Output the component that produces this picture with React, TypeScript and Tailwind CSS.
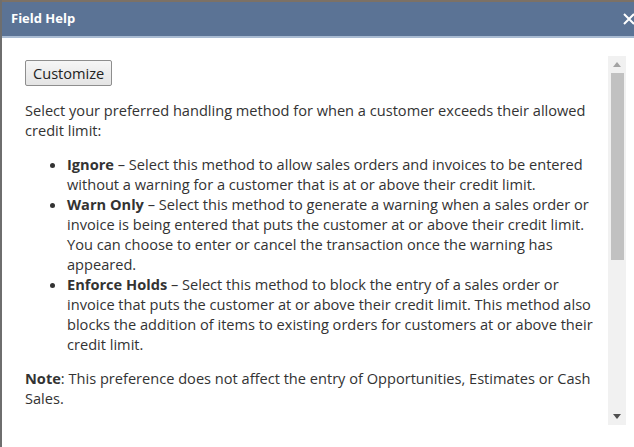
export default function App() {
  return (
    <div className="w-[634px] h-[447px] overflow-hidden bg-white flex flex-col border-l-2 border-[#6e6e6e] font-['Open_Sans',sans-serif]">
      <div className="h-[2px] bg-[#7c7166]" />
      <div className="h-[36px] bg-[#5b7395] flex items-center justify-between pl-[9px] border-b-2 border-[#a9bbd2]">
        <span className="text-white font-bold text-[13px]">Field Help</span>
        <svg width="14" height="14" viewBox="0 0 14 14" className="-mr-[2px]">
          <path d="M2 2L12 12M12 2L2 12" stroke="#ffffff" strokeWidth="2" />
        </svg>
      </div>
      <div className="flex flex-1">
        <div className="w-[598px] pl-[23px] pt-[22px] text-[14.6px] leading-[20px] text-[#333333]">
          <button className="h-[26px] px-[7px] border border-[#8e8e8e] rounded-[2px] bg-gradient-to-b from-[#f6f6f6] to-[#e4e4e4] text-[14.6px] text-[#222222] leading-none">
            Customize
          </button>
          <p className="mt-[14px]">
            Select your preferred handling method for when a customer exceeds their allowed credit limit:
          </p>
          <ul className="list-disc pl-[42px] mt-[14px]">
            <li>
              <b>Ignore</b> – Select this method to allow sales orders and invoices to be entered without a warning for a customer that is at or above their credit limit.
            </li>
            <li>
              <b>Warn Only</b> – Select this method to generate a warning when a sales order or invoice is being entered that puts the customer at or above their credit limit. You can choose to enter or cancel the transaction once the warning has appeared.
            </li>
            <li>
              <b>Enforce Holds</b> – Select this method to block the entry of a sales order or invoice that puts the customer at or above their credit limit. This method also blocks the addition of items to existing orders for customers at or above their credit limit.
            </li>
          </ul>
          <p className="mt-[14px]">
            <b>Note</b>: This preference does not affect the entry of Opportunities, Estimates or Cash Sales.
          </p>
        </div>
        <div className="ml-auto mr-[8px] mt-[18px] w-[18px] h-[369px] bg-[#f1f1f1] flex flex-col items-center">
          <div className="h-[17px] flex items-center justify-center">
            <svg width="8" height="5" viewBox="0 0 8 5">
              <path d="M0 5L4 0L8 5Z" fill="#a3a3a3" />
            </svg>
          </div>
          <div className="w-[13px] h-[187px] bg-[#c1c1c1]" />
          <div className="flex-1" />
          <div className="h-[17px] flex items-center justify-center">
            <svg width="8" height="5" viewBox="0 0 8 5">
              <path d="M0 0L8 0L4 5Z" fill="#505050" />
            </svg>
          </div>
        </div>
      </div>
    </div>
  );
}
